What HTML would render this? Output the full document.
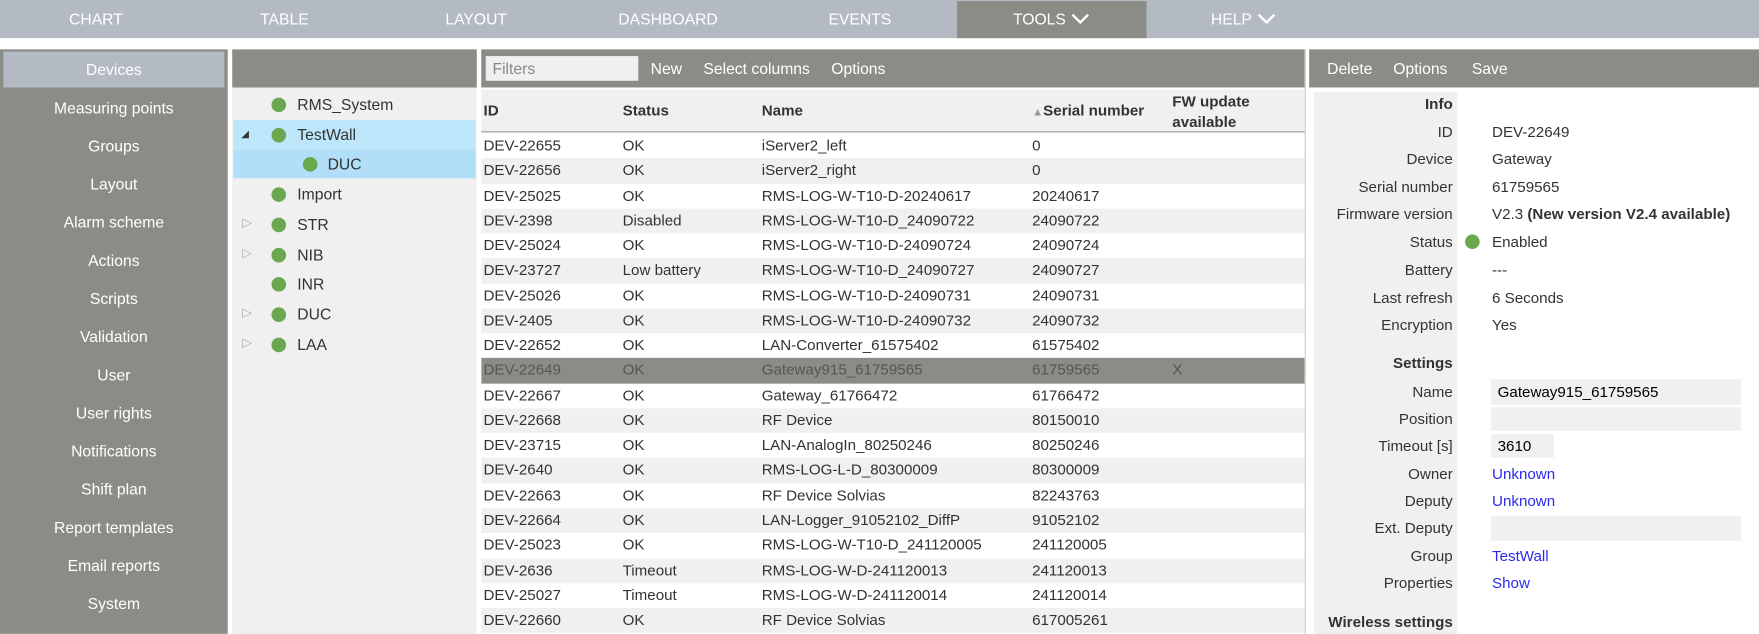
<!DOCTYPE html>
<html><head><style>
*{margin:0;padding:0;box-sizing:border-box}
body{width:1759px;height:633px;overflow:hidden;background:#fff;font-family:"Liberation Sans",sans-serif;font-size:13.5px;color:#333;position:relative}
#w{position:absolute;left:0;top:0;width:1568px;height:565px;transform:scale(1.12181);transform-origin:0 0}
.a{position:absolute;white-space:nowrap}
.nav{left:0;top:0;width:1568px;height:34px;background:#b3bac4}
.ni{top:0;height:34px;line-height:34px;width:171px;text-align:center;color:#fff;font-size:14px}
.g{background:#8c8c86}
.sb{color:#fff;width:197px;left:3px;text-align:center;height:32px;line-height:32px;font-size:14px}
.tb{color:#fff;font-size:14px;top:44px;height:34px;line-height:34px}
.dot{width:13px;height:13px;border-radius:50%;background:#6aa84f}
.r{position:relative;height:22.27px;line-height:22.27px;overflow:hidden;white-space:nowrap}
.r:nth-child(even){background:#f0f0f0}
.r span{position:absolute;top:0}
.r span:nth-child(1){left:2px}.r span:nth-child(2){left:126px}.r span:nth-child(3){left:250px}.r span:nth-child(4){left:491px}.r span:nth-child(5){left:616px}
.r.s{background:#8c8c86;color:#555}
.lab{right:273px;text-align:right}
.val{left:1330px}
.lnk{color:#2a2aee}
</style></head><body><div id="w">
<div class="a nav"></div>
<div class="a ni" style="left:0">CHART</div>
<div class="a ni" style="left:168px">TABLE</div>
<div class="a ni" style="left:339px">LAYOUT</div>
<div class="a ni" style="left:510px">DASHBOARD</div>
<div class="a ni" style="left:681px">EVENTS</div>
<div class="a" style="left:853px;top:1px;width:169px;height:33px;background:#8c8c86"></div>
<div class="a ni" style="left:852px">TOOLS <svg width="18" height="12" viewBox="0 0 18 12" style="vertical-align:-1px"><path d="M2 2 L9 9 L16 2" stroke="#fff" stroke-width="2.2" fill="none"/></svg></div>
<div class="a ni" style="left:1023px">HELP <svg width="18" height="12" viewBox="0 0 18 12" style="vertical-align:-1px"><path d="M2 2 L9 9 L16 2" stroke="#fff" stroke-width="2.2" fill="none"/></svg></div>

<div class="a g" style="left:0;top:44px;width:203px;height:521px"></div>
<div class="a" style="left:3px;top:46px;width:197px;height:32px;background:#b3bac4"></div>
<div class="a sb" style="top:46px">Devices</div>
<div class="a sb" style="top:80px">Measuring points</div>
<div class="a sb" style="top:114px">Groups</div>
<div class="a sb" style="top:148px">Layout</div>
<div class="a sb" style="top:182px">Alarm scheme</div>
<div class="a sb" style="top:216px">Actions</div>
<div class="a sb" style="top:250px">Scripts</div>
<div class="a sb" style="top:284px">Validation</div>
<div class="a sb" style="top:318px">User</div>
<div class="a sb" style="top:352px">User rights</div>
<div class="a sb" style="top:386px">Notifications</div>
<div class="a sb" style="top:420px">Shift plan</div>
<div class="a sb" style="top:454px">Report templates</div>
<div class="a sb" style="top:488px">Email reports</div>
<div class="a sb" style="top:522px">System</div>

<div class="a g" style="left:207px;top:44px;width:218px;height:34px"></div>
<div class="a" style="left:207px;top:78px;width:218px;height:487px;background:#f0f0f0"></div>
<div class="a" style="left:208px;top:107px;width:216px;height:26px;background:#bde6fb"></div>
<div class="a" style="left:208px;top:133px;width:216px;height:26px;background:#b2dff8"></div>
<div class="a dot" style="left:242px;top:87px"></div><div class="a" style="left:265px;top:85px;font-size:14px">RMS_System</div>
<div class="a" style="left:215px;top:114px;font-size:9px;color:#333">◢</div>
<div class="a dot" style="left:242px;top:114px"></div><div class="a" style="left:265px;top:112px;font-size:14px">TestWall</div>
<div class="a dot" style="left:270px;top:140px"></div><div class="a" style="left:292px;top:138px;font-size:14px">DUC</div>
<div class="a dot" style="left:242px;top:167px"></div><div class="a" style="left:265px;top:165px;font-size:14px">Import</div>
<div class="a" style="left:216px;top:192px;font-size:11px;color:#aaa">▷</div>
<div class="a dot" style="left:242px;top:194px"></div><div class="a" style="left:265px;top:192px;font-size:14px">STR</div>
<div class="a" style="left:216px;top:219px;font-size:11px;color:#aaa">▷</div>
<div class="a dot" style="left:242px;top:221px"></div><div class="a" style="left:265px;top:219px;font-size:14px">NIB</div>
<div class="a dot" style="left:242px;top:247px"></div><div class="a" style="left:265px;top:245px;font-size:14px">INR</div>
<div class="a" style="left:216px;top:272px;font-size:11px;color:#aaa">▷</div>
<div class="a dot" style="left:242px;top:274px"></div><div class="a" style="left:265px;top:272px;font-size:14px">DUC</div>
<div class="a" style="left:216px;top:299px;font-size:11px;color:#aaa">▷</div>
<div class="a dot" style="left:242px;top:301px"></div><div class="a" style="left:265px;top:299px;font-size:14px">LAA</div>

<div class="a g" style="left:429px;top:44px;width:734px;height:34px"></div>
<div class="a" style="left:433px;top:50px;width:136px;height:22px;background:#f0f0f0;color:#888;padding-left:6px;line-height:22px;font-size:14px">Filters</div>
<div class="a tb" style="left:580px">New</div>
<div class="a tb" style="left:627px">Select columns</div>
<div class="a tb" style="left:741px">Options</div>
<div class="a" style="left:429px;top:80px;width:734px;height:38px;background:#f0f0f0;border-bottom:1.5px solid #999"></div>
<div class="a" style="left:431px;top:91px;font-weight:bold">ID</div>
<div class="a" style="left:555px;top:91px;font-weight:bold">Status</div>
<div class="a" style="left:679px;top:91px;font-weight:bold">Name</div>
<div class="a" style="left:920px;top:91px;font-weight:bold"><span style="color:#999;font-size:10px">▲</span>Serial number</div>
<div class="a" style="left:1045px;top:82px;font-weight:bold;line-height:18px">FW update<br>available</div>
<div class="a" style="left:429px;top:119px;width:734px;height:446px;overflow:hidden">
<div class="r"><span>DEV-22655</span><span>OK</span><span>iServer2_left</span><span>0</span></div>
<div class="r"><span>DEV-22656</span><span>OK</span><span>iServer2_right</span><span>0</span></div>
<div class="r"><span>DEV-25025</span><span>OK</span><span>RMS-LOG-W-T10-D-20240617</span><span>20240617</span></div>
<div class="r"><span>DEV-2398</span><span>Disabled</span><span>RMS-LOG-W-T10-D_24090722</span><span>24090722</span></div>
<div class="r"><span>DEV-25024</span><span>OK</span><span>RMS-LOG-W-T10-D-24090724</span><span>24090724</span></div>
<div class="r"><span>DEV-23727</span><span>Low battery</span><span>RMS-LOG-W-T10-D_24090727</span><span>24090727</span></div>
<div class="r"><span>DEV-25026</span><span>OK</span><span>RMS-LOG-W-T10-D-24090731</span><span>24090731</span></div>
<div class="r"><span>DEV-2405</span><span>OK</span><span>RMS-LOG-W-T10-D-24090732</span><span>24090732</span></div>
<div class="r"><span>DEV-22652</span><span>OK</span><span>LAN-Converter_61575402</span><span>61575402</span></div>
<div class="r s"><span>DEV-22649</span><span>OK</span><span>Gateway915_61759565</span><span>61759565</span><span>X</span></div>
<div class="r"><span>DEV-22667</span><span>OK</span><span>Gateway_61766472</span><span>61766472</span></div>
<div class="r"><span>DEV-22668</span><span>OK</span><span>RF Device</span><span>80150010</span></div>
<div class="r"><span>DEV-23715</span><span>OK</span><span>LAN-AnalogIn_80250246</span><span>80250246</span></div>
<div class="r"><span>DEV-2640</span><span>OK</span><span>RMS-LOG-L-D_80300009</span><span>80300009</span></div>
<div class="r"><span>DEV-22663</span><span>OK</span><span>RF Device Solvias</span><span>82243763</span></div>
<div class="r"><span>DEV-22664</span><span>OK</span><span>LAN-Logger_91052102_DiffP</span><span>91052102</span></div>
<div class="r"><span>DEV-25023</span><span>OK</span><span>RMS-LOG-W-T10-D_241120005</span><span>241120005</span></div>
<div class="r"><span>DEV-2636</span><span>Timeout</span><span>RMS-LOG-W-D-241120013</span><span>241120013</span></div>
<div class="r"><span>DEV-25027</span><span>Timeout</span><span>RMS-LOG-W-D-241120014</span><span>241120014</span></div>
<div class="r"><span>DEV-22660</span><span>OK</span><span>RF Device Solvias</span><span>617005261</span></div>
</div>
<div class="a" style="left:1163px;top:44px;width:4px;height:521px;background:#fff;border-left:1px solid #ccc"></div>

<div class="a g" style="left:1167px;top:44px;width:401px;height:34px"></div>
<div class="a tb" style="left:1183px">Delete</div>
<div class="a tb" style="left:1242px">Options</div>
<div class="a tb" style="left:1312px">Save</div>
<div class="a" style="left:1171px;top:82px;width:128px;height:483px;background:#f0f0f0"></div>
<div class="a lab" style="top:85px;font-weight:bold">Info</div>
<div class="a lab" style="top:110px">ID</div><div class="a val" style="top:110px">DEV-22649</div>
<div class="a lab" style="top:134px">Device</div><div class="a val" style="top:134px">Gateway</div>
<div class="a lab" style="top:159px">Serial number</div><div class="a val" style="top:159px">61759565</div>
<div class="a lab" style="top:183px">Firmware version</div><div class="a val" style="top:183px">V2.3 <b>(New version V2.4 available)</b></div>
<div class="a lab" style="top:208px">Status</div><div class="a dot" style="left:1306px;top:209px"></div><div class="a val" style="top:208px">Enabled</div>
<div class="a lab" style="top:233px">Battery</div><div class="a val" style="top:233px">---</div>
<div class="a lab" style="top:258px">Last refresh</div><div class="a val" style="top:258px">6 Seconds</div>
<div class="a lab" style="top:282px">Encryption</div><div class="a val" style="top:282px">Yes</div>
<div class="a lab" style="top:316px;font-weight:bold">Settings</div>
<div class="a" style="left:1329px;top:338px;width:223px;height:23px;background:#f0f0f0"></div>
<div class="a" style="left:1329px;top:363px;width:223px;height:21px;background:#f0f0f0"></div>
<div class="a" style="left:1329px;top:387px;width:56px;height:21px;background:#f0f0f0"></div>
<div class="a" style="left:1329px;top:460px;width:223px;height:22px;background:#f0f0f0"></div>
<div class="a lab" style="top:342px">Name</div><div class="a" style="left:1335px;top:342px;color:#000">Gateway915_61759565</div>
<div class="a lab" style="top:366px">Position</div>
<div class="a lab" style="top:390px">Timeout [s]</div><div class="a" style="left:1335px;top:390px;color:#000">3610</div>
<div class="a lab" style="top:415px">Owner</div><div class="a val lnk" style="top:415px">Unknown</div>
<div class="a lab" style="top:439px">Deputy</div><div class="a val lnk" style="top:439px">Unknown</div>
<div class="a lab" style="top:463px">Ext. Deputy</div>
<div class="a lab" style="top:488px">Group</div><div class="a val lnk" style="top:488px">TestWall</div>
<div class="a lab" style="top:512px">Properties</div><div class="a val lnk" style="top:512px">Show</div>
<div class="a lab" style="top:547px;font-weight:bold">Wireless settings</div>
</div></body></html>
